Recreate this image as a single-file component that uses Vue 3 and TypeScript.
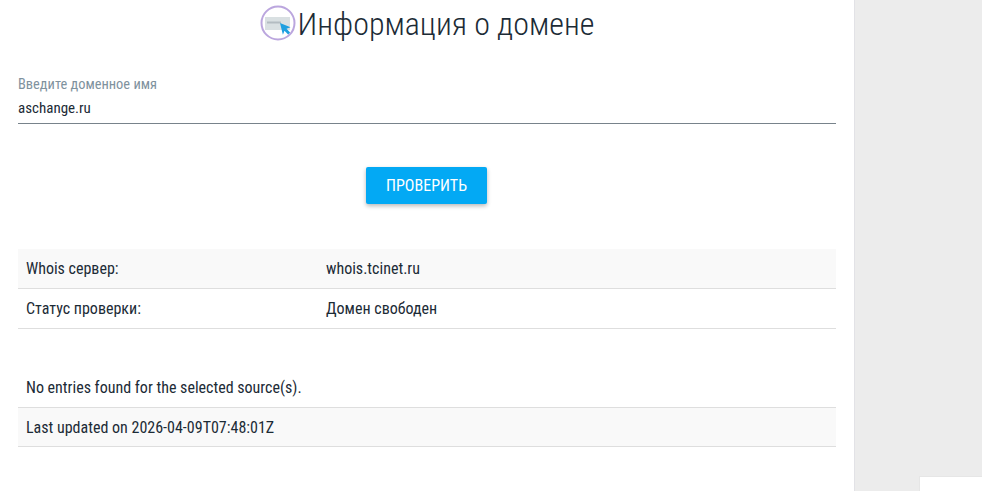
<template>
  <div class="page">
    <main class="content">
      <h1 class="title">
        <svg class="title-icon" width="36" height="38" viewBox="0 0 36 38">
          <circle cx="18" cy="19" r="16.5" fill="#fff" stroke="#bba6de" stroke-width="2" />
          <rect x="5" y="13" width="25" height="13" fill="#d9e0e2" />
          <rect x="7" y="17.5" width="14" height="2" fill="#b3bcc1" />
          <path d="M20 19l10.5 4.2-4 1.6 3.6 3.6-2 2-3.6-3.6-1.6 4z" fill="#1e9fe0" />
        </svg>
        <span>Информация о домене</span>
      </h1>

      <label class="field">
        <span class="field-label">Введите доменное имя</span>
        <input class="field-input" type="text" :value="domain" />
      </label>

      <div class="actions">
        <button class="check-btn" type="button">ПРОВЕРИТЬ</button>
      </div>

      <div class="rows whois">
        <div v-for="row in whoisRows" :key="row.name" class="row">
          <span class="row-name">{{ row.name }}</span>
          <span>{{ row.value }}</span>
        </div>
      </div>

      <div class="rows raw">
        <div v-for="line in rawLines" :key="line" class="row">{{ line }}</div>
      </div>
    </main>
    <aside class="side">
      <div class="side-box"></div>
    </aside>
  </div>
</template>

<script setup lang="ts">
const domain = 'aschange.ru'

const whoisRows = [
  { name: 'Whois сервер:', value: 'whois.tcinet.ru' },
  { name: 'Статус проверки:', value: 'Домен свободен' },
]

const rawLines = [
  'No entries found for the selected source(s).',
  'Last updated on 2026-04-09T07:48:01Z',
]
</script>

<style>
html,
body {
  margin: 0;
  background: #fff;
  overflow: hidden;
}
</style>

<style scoped>
.page {
  display: flex;
  width: 982px;
  height: 491px;
  overflow: hidden;
  font-family: "Roboto Condensed", Roboto, "Liberation Sans", sans-serif;
  font-stretch: condensed;
  color: #1c2b36;
}

.content {
  box-sizing: border-box;
  width: 854px;
  padding: 0 18px;
}

.title {
  display: flex;
  align-items: center;
  justify-content: center;
  gap: 2px;
  height: 48px;
  margin: 0;
  padding-top: 1px;
  box-sizing: border-box;
  font-size: 32px;
  font-weight: 300;
  line-height: 47px;
}

.title-icon {
  flex: none;
  margin: -4px 0 0 0;
}

.field {
  display: block;
  margin-top: 29px;
}

.field-label {
  display: block;
  font-size: 14.4px;
  line-height: 16px;
  color: #7f929e;
}

.field-input {
  display: block;
  box-sizing: border-box;
  width: 100%;
  height: 31px;
  padding: 0;
  border: 0;
  border-bottom: 1px solid #78838b;
  outline: 0;
  font: inherit;
  font-size: 15px;
  color: #1c2b36;
  background: transparent;
}

.actions {
  display: flex;
  justify-content: center;
  margin-top: 43px;
}

.check-btn {
  width: 121px;
  height: 37px;
  margin-right: 1px;
  padding: 0;
  border: 0;
  border-radius: 2px;
  font: inherit;
  font-size: 16px;
  color: #fff;
  background: #03a9f4;
  box-shadow: 0 2px 4px rgba(0, 0, 0, 0.28);
}

.rows {
  font-size: 16px;
}

.whois {
  margin-top: 45px;
}

.raw {
  margin-top: 39px;
}

.row {
  display: flex;
  align-items: center;
  box-sizing: border-box;
  height: 40px;
  padding: 0 8px;
  border-bottom: 1px solid #dedede;
}

.row:nth-child(odd) {
  background: #f9f9f9;
}

.raw .row:nth-child(odd) {
  background: #fff;
}

.raw .row:nth-child(even) {
  background: #f9f9f9;
  height: 39px;
}

.row-name {
  width: 300px;
}

.side {
  flex: 1;
  display: flex;
  flex-direction: column;
  justify-content: flex-end;
  box-sizing: border-box;
  background: #ececec;
  border-left: 1px solid #e2e2e6;
}

.side-box {
  height: 14px;
  margin-left: 64px;
  background: #fff;
  border-top: 1px solid #e6e6e6;
  border-left: 1px solid #e6e6e6;
}
</style>
